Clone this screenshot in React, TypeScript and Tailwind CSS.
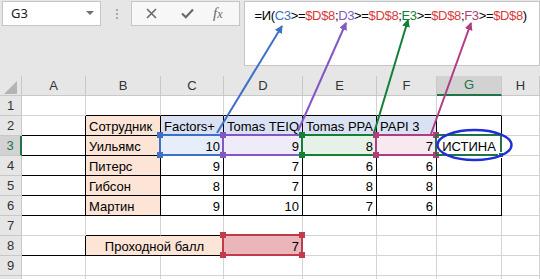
import React from "react";

type CellSpec = {
  text?: string;
  align?: "left" | "right" | "center";
  bg?: string;
  br?: string;
  bb?: string;
  span?: number;
  overlay?: React.ReactNode;
};

const GRID = "border-[#d4d4d4]";

function Handles({ color }: { color: string }) {
  return (
    <>
      <div className={`absolute -left-[4px] -top-[4px] w-[6px] h-[6px] ${color}`} />
      <div className={`absolute -right-[4px] -top-[4px] w-[6px] h-[6px] ${color}`} />
      <div className={`absolute -left-[4px] -bottom-[4px] w-[6px] h-[6px] ${color}`} />
      <div className={`absolute -right-[4px] -bottom-[4px] w-[6px] h-[6px] ${color}`} />
    </>
  );
}

function Range({ border, handle }: { border: string; handle: string }) {
  return (
    <div className={`absolute -left-[2px] -top-[2px] -right-[1px] -bottom-[1px] border-2 ${border} z-10`}>
      <Handles color={handle} />
    </div>
  );
}

function Cell({ c }: { c: CellSpec }) {
  const align =
    c.align === "right" ? "justify-end pr-[3px]" : c.align === "center" ? "justify-center" : "justify-start pl-[3px]";
  return (
    <div
      className={`relative h-[20px] flex items-center ${align} border-r border-b ${c.br ?? GRID} ${c.bb ?? ""} ${
        c.bg ?? "bg-white"
      } ${c.span === 2 ? "col-span-2" : ""} text-[13px] leading-[20px] pt-[2px] text-black whitespace-nowrap overflow-visible`}
    >
      <span className="relative z-0">{c.text}</span>
      {c.overlay}
    </div>
  );
}

function RowHeader({ n, active }: { n: number; active?: boolean }) {
  return (
    <div
      className={`h-[20px] flex items-center justify-center text-[13px] border-b border-[#c8c8c8] ${
        active ? "bg-[#d2d2d2] text-[#217346] border-r-2 border-r-[#217346]" : "bg-[#e6e6e6] text-[#333] border-r border-r-[#c8c8c8]"
      }`}
    >
      {n > 9 ? "" : n}
    </div>
  );
}

export default function App() {
  const B = "border-r-black";
  const BB = "border-b-black";
  const peach = "bg-[#fce4d6]";
  const lav = "bg-[#d9e1f2]";

  const rows: CellSpec[][] = [];
  rows.push([{}, { bb: BB }, { bb: BB }, { bb: BB }, { bb: BB }, { bb: BB }, { bb: BB }, {}]);
  rows.push([
    { br: B },
    { text: "Сотрудник", bg: peach, br: B, bb: BB },
    { text: "Factors+", bg: lav, br: B, bb: BB },
    { text: "Tomas TEIQ", bg: lav, br: B, bb: BB },
    { text: "Tomas PPA", bg: lav, br: B, bb: BB },
    { text: "PAPI 3", bg: lav, br: B, bb: BB },
    { br: B, bb: BB },
    {},
  ]);
  rows.push([
    { br: B },
    { text: "Уильямс", bg: peach, br: B, bb: BB },
    {
      text: "10",
      align: "right",
      bg: "bg-[#e7eef9]",
      br: B,
      bb: BB,
      overlay: <Range border="border-[#3d70c6]" handle="bg-[#3d70c6]" />,
    },
    {
      text: "9",
      align: "right",
      bg: "bg-[#f0ebf8]",
      br: B,
      bb: BB,
      overlay: <Range border="border-[#8358c4]" handle="bg-[#8358c4]" />,
    },
    {
      text: "8",
      align: "right",
      bg: "bg-[#e6f2e7]",
      br: B,
      bb: BB,
      overlay: <Range border="border-[#148036]" handle="bg-[#148036]" />,
    },
    {
      text: "7",
      align: "right",
      bg: "bg-[#f8e8ef]",
      br: B,
      bb: BB,
      overlay: <Range border="border-[#b03d80]" handle="bg-[#b03d80]" />,
    },
    {
      text: "ИСТИНА",
      align: "center",
      br: B,
      bb: BB,
      overlay: (
        <div className="absolute -left-[2px] -top-[2px] -right-[1px] -bottom-[1px] border-2 border-[#217346] z-10">
          <div className="absolute -right-[4px] -bottom-[4px] w-[6px] h-[6px] bg-[#217346] border border-white" />
        </div>
      ),
    },
    {},
  ]);
  const data = [
    ["Питерс", "9", "7", "6", "6"],
    ["Гибсон", "8", "7", "8", "8"],
    ["Мартин", "9", "10", "7", "6"],
  ];
  data.forEach((d) => {
    rows.push([
      { br: B },
      { text: d[0], bg: peach, br: B, bb: BB },
      { text: d[1], align: "right", br: B, bb: BB },
      { text: d[2], align: "right", br: B, bb: BB },
      { text: d[3], align: "right", br: B, bb: BB },
      { text: d[4], align: "right", br: B, bb: BB },
      { br: B, bb: BB },
      {},
    ]);
  });
  rows.push([{}, { bb: BB }, { bb: BB }, {}, {}, {}, {}, {}]);
  rows.push([
    { br: B },
    { text: "Проходной балл", align: "center", bg: peach, br: B, bb: BB, span: 2 },
    {
      text: "7",
      align: "right",
      bg: "bg-[#eab6ba]",
      overlay: <Range border="border-[#c23b4a]" handle="bg-[#c23b4a]" />,
    },
    {},
    {},
    {},
    {},
  ]);
  rows.push([{}, {}, {}, {}, {}, {}, {}, {}]);
  rows.push([{}, {}, {}, {}, {}, {}, {}, {}]);

  const letters = ["A", "B", "C", "D", "E", "F", "G", "H"];

  return (
    <div
      className="relative w-[540px] h-[279px] overflow-hidden bg-[#e6e6e6]"
      style={{ fontFamily: '"Liberation Sans", Arial, sans-serif' }}
    >
      <div className="h-[76px] flex items-start pt-[1px]">
        <div className="ml-[2px] w-[100px] h-[25px] bg-white border border-[#c6c6c6] flex items-center justify-between pl-[8px] pr-[6px]">
          <span className="text-[13px] text-[#222]" style={{ fontFamily: '"Noto Sans", sans-serif' }}>
            G3
          </span>
          <svg width="8" height="5" viewBox="0 0 8 5">
            <path d="M0 0 L8 0 L4 4 Z" fill="#707070" />
          </svg>
        </div>
        <div className="ml-[15px] mt-[8px] flex flex-col gap-[2px]">
          <div className="w-[2px] h-[2px] bg-[#a8a8a8]" />
          <div className="w-[2px] h-[2px] bg-[#a8a8a8]" />
          <div className="w-[2px] h-[2px] bg-[#a8a8a8]" />
        </div>
        <div className="ml-[13px] w-[110px] h-[25px] bg-[#f7f7f7] border border-[#c6c6c6] flex items-center">
          <svg className="ml-[14px]" width="11" height="11" viewBox="0 0 11 11">
            <path d="M1 1 L10 10 M10 1 L1 10" stroke="#6a6a6a" strokeWidth="1.6" />
          </svg>
          <svg className="ml-[24px]" width="13" height="11" viewBox="0 0 13 11">
            <path d="M1 5.5 L4.8 9.2 L12 1.5" stroke="#6a6a6a" strokeWidth="2.2" fill="none" />
          </svg>
          <span
            className="ml-[19px] text-[15px] italic text-[#6a6a6a] leading-none"
            style={{ fontFamily: '"Liberation Serif", serif' }}
          >
            f<span className="text-[12px]">x</span>
          </span>
        </div>
        <div className="ml-[4px] w-[300px] h-[65px] bg-white border border-[#c6c6c6] pl-[10px] pt-[6px]">
          <div className="text-[13px] leading-[16px] tracking-[-0.35px] text-black whitespace-nowrap">
            <span>=И(</span>
            <span className="text-[#3d70c6]">C3</span>
            <span>&gt;=</span>
            <span className="text-[#d83a3a]">$D$8</span>
            <span>;</span>
            <span className="text-[#8358c4]">D3</span>
            <span>&gt;=</span>
            <span className="text-[#d83a3a]">$D$8</span>
            <span>;</span>
            <span className="text-[#148036]">E3</span>
            <span>&gt;=</span>
            <span className="text-[#d83a3a]">$D$8</span>
            <span>;</span>
            <span className="text-[#b03d80]">F3</span>
            <span>&gt;=</span>
            <span className="text-[#d83a3a]">$D$8</span>
            <span>)</span>
          </div>
        </div>
      </div>

      <div className="grid grid-cols-[22px_64px_75px_63px_79px_74px_60px_65px_1fr]">
        <div className="relative h-[20px] border-r border-b border-[#c8c8c8] bg-[#e6e6e6]">
          <svg className="absolute left-[4px] top-[5px]" width="13" height="13" viewBox="0 0 13 13">
            <path d="M13 0 L13 13 L0 13 Z" fill="#b4b4b4" />
          </svg>
        </div>
        {letters.map((l, i) => (
          <div
            key={l}
            className={`h-[20px] flex items-center justify-center text-[13px] border-r border-[#c8c8c8] ${
              i === 6
                ? "bg-[#d2d2d2] text-[#217346] border-b-2 border-b-[#217346]"
                : "bg-[#e6e6e6] text-[#333] border-b border-b-[#c8c8c8]"
            }`}
          >
            {l}
          </div>
        ))}
        {rows.map((r, ri) => (
          <React.Fragment key={ri}>
            <RowHeader n={ri + 1} active={ri === 2} />
            {r.map((c, ci) => (
              <Cell key={ci} c={c} />
            ))}
          </React.Fragment>
        ))}
      </div>

      <svg className="absolute inset-0 z-20 pointer-events-none" width="540" height="279" viewBox="0 0 540 279">
        <defs>
          {[
            ["ab", "#3d70c6"],
            ["ap", "#8358c4"],
            ["ag", "#148036"],
            ["am", "#b03d80"],
          ].map(([id, col]) => (
            <marker key={id} id={id} markerWidth="8" markerHeight="8" refX="7" refY="4" orient="auto" markerUnits="userSpaceOnUse">
              <path d="M0 0 L8 4 L0 8 Z" fill={col} />
            </marker>
          ))}
        </defs>
        <line x1="217" y1="133" x2="282" y2="26" stroke="#3d70c6" strokeWidth="2" markerEnd="url(#ab)" />
        <line x1="298" y1="131" x2="346" y2="23" stroke="#8358c4" strokeWidth="2" markerEnd="url(#ap)" />
        <line x1="374" y1="133" x2="408" y2="20" stroke="#148036" strokeWidth="2" markerEnd="url(#ag)" />
        <line x1="431" y1="134" x2="471" y2="23" stroke="#b03d80" strokeWidth="2" markerEnd="url(#am)" />
        <ellipse cx="474.5" cy="145" rx="37" ry="15" fill="none" stroke="#1d2fd6" strokeWidth="2.4" />
      </svg>
    </div>
  );
}
